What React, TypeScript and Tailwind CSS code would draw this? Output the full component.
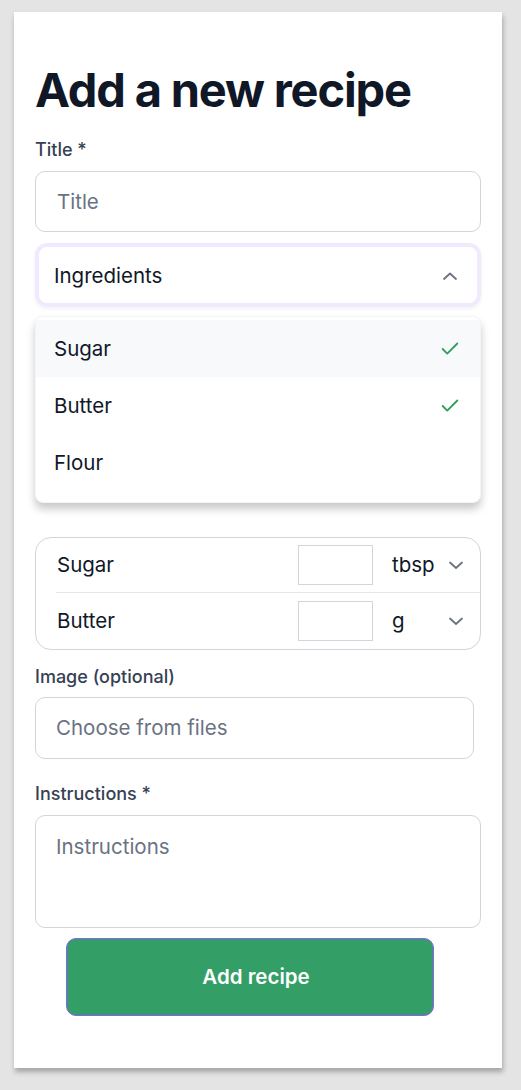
import React from "react";

const Check = () => (
  <svg width="22" height="22" viewBox="0 0 24 24" fill="none" stroke="#2f9e5e" strokeWidth="2" strokeLinecap="round" strokeLinejoin="round">
    <path d="M20 6 9 17l-5-5" />
  </svg>
);

const ChevronDown = () => (
  <svg width="16" height="16" viewBox="0 0 16 16" fill="none" stroke="#6b7280" strokeWidth="1.8" strokeLinecap="round" strokeLinejoin="round">
    <path d="M2 5.5 8 11l6-5.5" />
  </svg>
);

const ChevronUp = () => (
  <svg width="16" height="16" viewBox="0 0 16 16" fill="none" stroke="#6b7280" strokeWidth="1.8" strokeLinecap="round" strokeLinejoin="round">
    <path d="M2 11 8 5.5l6 5.5" />
  </svg>
);

function Row({ name, unit, last }: { name: string; unit: string; last?: boolean }) {
  return (
    <div className={`flex items-center ${last ? "h-[56px]" : "h-[54px]"}`}>
      <div className="flex-1 pl-[21px] text-[20.5px] text-gray-900">{name}</div>
      <div className="w-[75px] h-[40px] border border-gray-300 bg-white" />
      <div className="ml-[19px] w-[56px] text-[20.5px] text-gray-900">{unit}</div>
      <div className="mr-[16px]">
        <ChevronDown />
      </div>
    </div>
  );
}

export default function App() {
  return (
    <div className="min-h-[1090px] bg-[#e4e4e4] pt-[12px] pl-[14px] font-['Inter',sans-serif]">
      <div className="w-[488px] bg-white pt-[54px] pb-[52px] px-[21px] shadow-[1px_4px_5px_rgba(0,0,0,0.28)]">
        <h1 className="text-[47px] leading-[48px] font-bold text-gray-900 tracking-tight">Add a new recipe</h1>

        <div className="mt-6 text-[18px] leading-6 font-medium text-gray-700">Title *</div>
        <div className="mt-[9px] h-[61px] rounded-[10px] border border-gray-300 flex items-center pl-[21px] pt-[1px] text-[20.5px] text-gray-500">
          Title
        </div>

        <div className="mt-[11px] rounded-[12px] border-4 border-[#f1eafe] shadow-[0_2px_4px_rgba(0,0,0,0.06)]">
          <div className="h-[56px] rounded-[9px] bg-white flex items-center pl-[15px] pr-[19px] pt-[2px] text-[20.5px] text-gray-900">
            <span className="flex-1">Ingredients</span>
            <ChevronUp />
          </div>
        </div>

        <div className="mt-[9px] rounded-lg border border-gray-100 bg-white pt-[3px] pb-[11px] shadow-[0_6px_8px_rgba(0,0,0,0.22)]">
          <div className="h-[57px] bg-[#f8f9fa] flex items-center pl-[18px] pr-[19px] pt-[1px] text-[20.5px] text-gray-900">
            <span className="flex-1">Sugar</span>
            <Check />
          </div>
          <div className="h-[57px] flex items-center pl-[18px] pr-[19px] pt-[1px] text-[20.5px] text-gray-900">
            <span className="flex-1">Butter</span>
            <Check />
          </div>
          <div className="h-[57px] flex items-center pl-[18px] pr-[19px] pt-[1px] text-[20.5px] text-gray-900">
            <span className="flex-1">Flour</span>
          </div>
        </div>

        <div className="mt-[34px] rounded-2xl border border-gray-300">
          <Row name="Sugar" unit="tbsp" />
          <div className="ml-[20px] border-t border-gray-200" />
          <Row name="Butter" unit="g" last />
        </div>

        <div className="mt-[15px] text-[18px] leading-6 font-medium text-gray-700">Image (optional)</div>
        <div className="mt-[8px] w-[439px] h-[62px] rounded-[10px] border border-gray-300 flex items-center pl-[20px] pt-[1px] text-[20.5px] text-gray-500">
          Choose from files
        </div>

        <div className="mt-[23px] text-[18px] leading-6 font-medium text-gray-700">Instructions *</div>
        <div className="mt-[9px] h-[113px] rounded-[10px] border border-gray-300 pt-[17px] pl-[20px] text-[20.5px] leading-[28px] text-gray-500">
          Instructions
        </div>

        <button className="mt-[10px] ml-[31px] w-[368px] h-[78px] rounded-[10px] bg-[#339e66] border-[1.5px] border-[#8b5cf6] pl-[12px] text-white text-[20.5px] font-semibold">
          Add recipe
        </button>
      </div>
    </div>
  );
}
